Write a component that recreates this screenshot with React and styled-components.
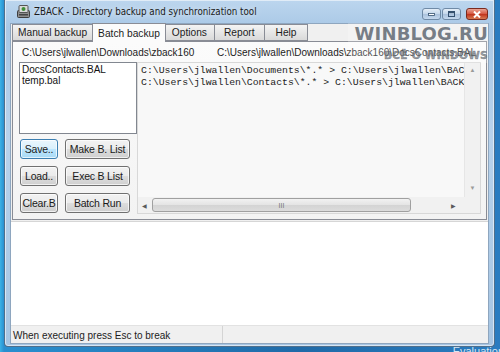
import React from 'react';
import styled, { createGlobalStyle } from 'styled-components';

const GlobalStyle = createGlobalStyle`
	html, body {
		margin: 0;
		padding: 0;
	}
	body {
		width: 500px;
		height: 352px;
		overflow: hidden;
		font-family: "Liberation Sans", Arial, sans-serif;
	}
`;

const Desktop = styled.div`
	position: relative;
	width: 500px;
	height: 352px;
	overflow: hidden;
	background: linear-gradient(90deg, #3ab2e6 0px, #2a8fcf 4px, #1f6aa8 60%, #2a7cc0 100%);
	padding-left: 4px;
	box-sizing: border-box;
`;

const Window = styled.div`
	width: 491px;
	height: 347px;
	box-sizing: border-box;
	border: 1px solid #4f6f8c;
	border-top: none;
	border-radius: 0 0 4px 4px;
	background: linear-gradient(180deg, #bcd6ee 0%, #a9c8e6 8%, #b7d2ec 40%, #a6c5e3 100%);
	padding: 0 5px 2px 5px;
	display: flex;
	flex-direction: column;
	box-shadow: inset 0 0 0 1px rgba(255, 255, 255, 0.55);
`;

const TitleBar = styled.div`
	height: 23px;
	display: flex;
	align-items: center;
	padding-left: 7px;
`;

const Title = styled.span`
	font-family: "DejaVu Sans Condensed", "Liberation Sans", sans-serif;
	font-size: 9.7px;
	color: #1a1a1a;
	margin-left: 4px;
	text-shadow: 0 0 6px rgba(255, 255, 255, 0.9);
`;

const Caption = styled.div`
	margin-left: auto;
	margin-right: 1px;
	display: flex;
	align-self: flex-start;
	margin-top: 8px;
	gap: 1px;
`;

const CaptionButton = styled.div`
	width: ${p => (p.close ? 22 : 19)}px;
	height: 12px;
	box-sizing: border-box;
	border: 1px solid ${p => (p.close ? '#7a2a1e' : '#6f8aa6')};
	border-radius: 3px;
	margin-left: ${p => (p.close ? 4 : 0)}px;
	background: ${p =>
		p.close
			? 'linear-gradient(180deg, #eaa595 0%, #d5553f 50%, #c0321c 51%, #d77a52 100%)'
			: 'linear-gradient(180deg, #e4eef8 0%, #c3d6ea 50%, #a9c1dc 51%, #c4d8ee 100%)'};
	display: flex;
	align-items: center;
	justify-content: center;
`;

const Client = styled.div`
	flex: 1;
	display: flex;
	flex-direction: column;
	background: #f0f0f0;
	border: 1px solid #8ea6bf;
	min-height: 0;
`;

const TabStrip = styled.div`
	height: 17px;
	display: flex;
	align-items: flex-end;
	padding-left: 1px;
	position: relative;
	z-index: 1;
`;

const Tab = styled.div`
	box-sizing: border-box;
	height: ${p => (p.active ? 19 : 17)}px;
	margin-bottom: ${p => (p.active ? -1 : 0)}px;
	padding: 0 ${p => p.pad || 5}px;
	margin-left: ${p => (p.active ? -1 : 0)}px;
	margin-right: ${p => (p.active ? -1 : 0)}px;
	border: 1px solid #898c95;
	border-bottom: ${p => (p.active ? 'none' : '1px solid #898c95')};
	border-left: ${p => (p.first || p.active ? '1px solid #898c95' : 'none')};
	background: ${p => (p.active ? '#fbfbfb' : 'linear-gradient(180deg, #f4f4f4 0%, #e6e6e6 50%, #d9d9d9 100%)')};
	font-size: 10.2px;
	color: #1c1c1c;
	display: flex;
	align-items: center;
	position: relative;
	z-index: ${p => (p.active ? 2 : 1)};
`;

const Panel = styled.div`
	height: 179px;
	box-sizing: border-box;
	border: 1px solid #898c95;
	margin: 0 1px;
	background: linear-gradient(180deg, #fbfbfb 0%, #f3f3f3 100%);
	padding: 4px 5px 5px 6px;
	display: flex;
	flex-direction: column;
`;

const PathRow = styled.div`
	display: flex;
	font-size: 10px;
	color: #1c1c1c;
	height: 13px;
	align-items: center;
	padding-left: 3px;
	white-space: nowrap;
	overflow: hidden;
`;

const PathLabel = styled.span`
	width: ${p => p.w}px;
	flex-shrink: 0;
`;

const Body = styled.div`
	flex: 1;
	display: flex;
	margin-top: 3px;
	min-height: 0;
`;

const LeftColumn = styled.div`
	width: 118px;
	display: flex;
	flex-direction: column;
	flex-shrink: 0;
`;

const ListBox = styled.div`
	height: 72px;
	box-sizing: border-box;
	background: #fff;
	border: 1px solid #828790;
	padding: 1px 2px;
	font-size: 10px;
	line-height: 11px;
	color: #111;
`;

const ButtonGrid = styled.div`
	display: grid;
	grid-template-columns: 38px 65px;
	column-gap: 7px;
	row-gap: 7px;
	margin-top: 5px;
	padding-left: 1px;
`;

const Button = styled.div`
	height: 20px;
	box-sizing: border-box;
	border: 1px solid ${p => (p.focused ? '#3c7fb1' : '#707070')};
	border-radius: 3px;
	background: ${p =>
		p.focused
			? 'linear-gradient(180deg, #eaf6fd 0%, #d9f0fc 50%, #bee6fd 51%, #a7d9f5 100%)'
			: 'linear-gradient(180deg, #f2f2f2 0%, #ebebeb 50%, #dddddd 51%, #cfcfcf 100%)'};
	box-shadow: inset 0 0 0 1px rgba(255, 255, 255, 0.7);
	font-size: 10.5px;
	color: #1a1a1a;
	display: flex;
	align-items: center;
	justify-content: center;
	white-space: nowrap;
	letter-spacing: -0.2px;
`;

const Memo = styled.div`
	flex: 1;
	box-sizing: border-box;
	border: 1px solid #d8d8d8;
	background: #f8f8f8;
	display: grid;
	grid-template-columns: 1fr 16px;
	grid-template-rows: 1fr 16px;
	min-width: 0;
`;

const MemoText = styled.div`
	font-family: "Liberation Mono", "Courier New", monospace;
	font-size: 9.8px;
	line-height: 12px;
	color: #222;
	padding: 2px 0 0 3px;
	white-space: pre;
	overflow: hidden;
`;

const VScroll = styled.div`
	background: #f1f1f1;
	border-left: 1px solid #e6e6e6;
	display: flex;
	flex-direction: column;
	justify-content: space-between;
	align-items: center;
	padding: 4px 0 6px;
	color: #9a9a9a;
	font-size: 6px;
`;

const HScroll = styled.div`
	background: #f1f1f1;
	display: flex;
	align-items: center;
	padding: 0 4px 0 4px;
	color: #5a5a5a;
	font-size: 6px;
`;

const ArrowRight = styled.span`
	margin-left: auto;
	margin-right: 4px;
`;

const Thumb = styled.div`
	width: 259px;
	height: 14px;
	box-sizing: border-box;
	margin-left: 5px;
	border: 1px solid #a0a0a0;
	border-radius: 3px;
	background: linear-gradient(180deg, #f2f2f2 0%, #e4e4e4 50%, #d4d4d4 51%, #dcdcdc 100%);
	display: flex;
	align-items: center;
	justify-content: center;
	color: #777;
	font-size: 7px;
`;

const Corner = styled.div`
	background: #f1f1f1;
`;

const Output = styled.div`
	flex: 1;
	background: #fff;
	margin-top: 1px;
	border-top: 1px solid #d6d6d6;
`;

const StatusBar = styled.div`
	height: 17px;
	display: flex;
	align-items: center;
	background: #f0f0f0;
	border-top: 1px solid #e2e2e2;
	font-size: 10px;
	color: #1c1c1c;
`;

const StatusPane = styled.div`
	width: ${p => p.w}px;
	height: 100%;
	display: flex;
	align-items: center;
	padding: 2px 0 0 2px;
	box-sizing: border-box;
	border-right: ${p => (p.divider ? '1px solid #d4d4d4' : 'none')};
	flex: ${p => (p.grow ? 1 : 'none')};
`;

const Watermark = styled.div`
	position: absolute;
	right: 12px;
	top: 23px;
	padding: 2px 0 2px 6px;
	background: rgba(255, 255, 255, 0.22);
	font-family: "DejaVu Sans", "Liberation Sans", sans-serif;
	font-weight: bold;
	color: rgba(95, 104, 114, 0.85);
	text-align: right;
	line-height: 1;
	pointer-events: none;
`;

const MarkTitle = styled.div`
	font-size: 18px;
	letter-spacing: 0.2px;
`;

const MarkSub = styled.div`
	font-size: 10.5px;
	margin-top: 7px;
	letter-spacing: 0.3px;
	color: rgba(110, 118, 126, 0.7);
	-webkit-text-stroke: 0.4px rgba(60, 66, 72, 0.6);
`;

const Evaluation = styled.div`
	position: absolute;
	right: -4px;
	bottom: -5px;
	font-size: 11px;
	color: #d8e6f2;
`;

const AppIcon = () => (
	<svg width="13" height="13" viewBox="0 0 13 13">
		<rect x="0.5" y="5.5" width="12" height="7" rx="1" fill="#8d8d8d" stroke="#3d3d3d" />
		<rect x="2" y="0.5" width="9" height="7" rx="1" fill="#d9d9d9" stroke="#555" />
		<circle cx="6.5" cy="4" r="2" fill="#3f8f3a" />
		<rect x="2" y="9" width="9" height="1.5" fill="#444" />
	</svg>
);

const MinGlyph = () => (
	<svg width="7" height="3" viewBox="0 0 7 3">
		<rect x="0.5" y="0.5" width="6" height="2" fill="#fff" stroke="#34506e" strokeWidth="0.8" />
	</svg>
);

const MaxGlyph = () => (
	<svg width="7" height="6" viewBox="0 0 7 6">
		<rect x="0.5" y="0.5" width="6" height="5" fill="none" stroke="#34506e" strokeWidth="1" />
		<rect x="1" y="1" width="5" height="1.2" fill="#34506e" />
	</svg>
);

const CloseGlyph = () => (
	<svg width="8" height="7" viewBox="0 0 8 7">
		<path d="M1 0.5 L7 6.5 M7 0.5 L1 6.5" stroke="#fff" strokeWidth="2" />
	</svg>
);

const tabs = [
	{ label: 'Manual backup', pad: 5 },
	{ label: 'Batch backup', pad: 5, active: true },
	{ label: 'Options', pad: 7 },
	{ label: 'Report', pad: 9 },
	{ label: 'Help', pad: 11 },
];

const memoLines = [
	'C:\\Users\\jlwallen\\Documents\\*.* > C:\\Users\\jlwallen\\BACKUP',
	'C:\\Users\\jlwallen\\Contacts\\*.* > C:\\Users\\jlwallen\\BACKUP',
];

const App = () => (
	<>
		<GlobalStyle />
		<Desktop>
			<Window>
				<TitleBar>
					<AppIcon />
					<Title>ZBACK - Directory backup and synchronization tool</Title>
					<Caption>
						<CaptionButton><MinGlyph /></CaptionButton>
						<CaptionButton><MaxGlyph /></CaptionButton>
						<CaptionButton close><CloseGlyph /></CaptionButton>
					</Caption>
				</TitleBar>
				<Client>
					<TabStrip>
						{tabs.map((t, i) => (
							<Tab key={t.label} first={i === 0} active={t.active} pad={t.pad}>
								{t.label}
							</Tab>
						))}
					</TabStrip>
					<Panel>
						<PathRow>
							<PathLabel w={195}>C:\Users\jlwallen\Downloads\zback160</PathLabel>
							<PathLabel w={300}>C:\Users\jlwallen\Downloads\zback160\DocsContacts.BAL</PathLabel>
						</PathRow>
						<Body>
							<LeftColumn>
								<ListBox>
									<div>DocsContacts.BAL</div>
									<div>temp.bal</div>
								</ListBox>
								<ButtonGrid>
									<Button focused>Save..</Button>
									<Button>Make B. List</Button>
									<Button>Load..</Button>
									<Button>Exec B List</Button>
									<Button>Clear.B</Button>
									<Button>Batch Run</Button>
								</ButtonGrid>
							</LeftColumn>
							<Memo>
								<MemoText>{memoLines.join('\n')}</MemoText>
								<VScroll>
									<span>▲</span>
									<span>▼</span>
								</VScroll>
								<HScroll>
									<span>◀</span>
									<Thumb>III</Thumb>
									<ArrowRight>▶</ArrowRight>
								</HScroll>
								<Corner />
							</Memo>
						</Body>
					</Panel>
					<Output />
					<StatusBar>
						<StatusPane w={212} divider>When executing press Esc to break</StatusPane>
						<StatusPane grow />
					</StatusBar>
				</Client>
			</Window>
			<Watermark>
				<MarkTitle>WINBLOG.RU</MarkTitle>
				<MarkSub>ВСЁ О WINDOWS</MarkSub>
			</Watermark>
			<Evaluation>Evaluation</Evaluation>
		</Desktop>
	</>
);

export default App;
